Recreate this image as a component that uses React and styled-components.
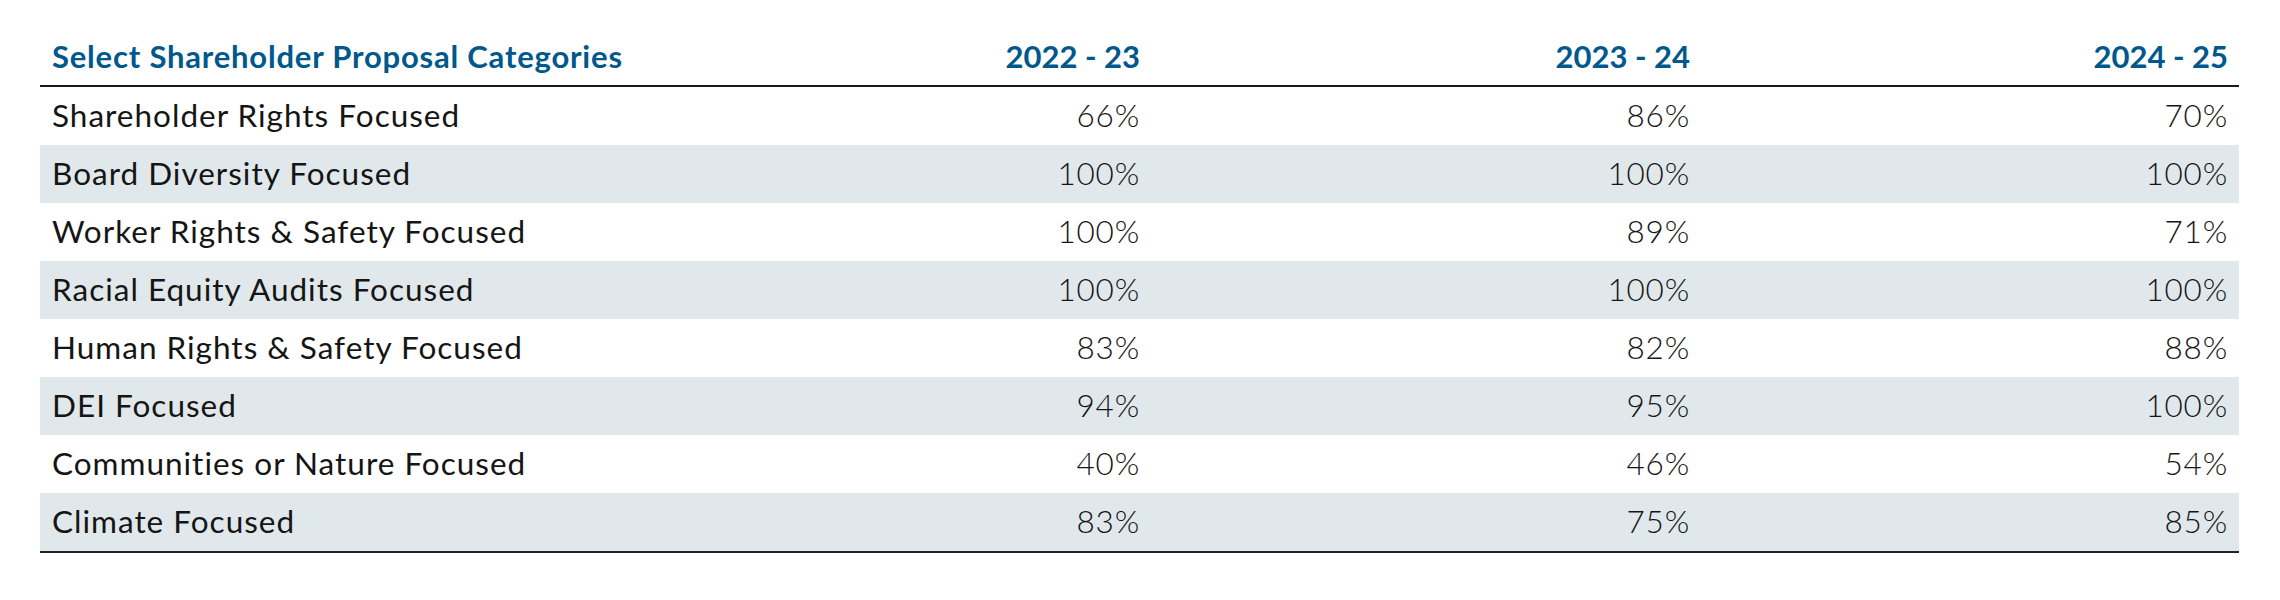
import React from "react";
import styled, { createGlobalStyle } from "styled-components";

const Global = createGlobalStyle`
  html, body { margin: 0; padding: 0; background: #ffffff; }
  body { font-family: Lato, "Open Sans", "Liberation Sans", sans-serif; }
`;

const Page = styled.div`
  padding: 30px 41px 0 40px;
`;

const Table = styled.div`
  display: grid;
  grid-template-columns: 561px 550px 550px 538px;
  border-bottom: 2px solid #222222;
`;

const HeadCell = styled.div`
  padding: 9px 11px 11px 12px;
  font-size: 31px;
  line-height: 35px;
  font-weight: 700;
  letter-spacing: ${(p) => (p.$num ? "0" : "0.8px")};
  color: #00588c;
  text-align: ${(p) => (p.$num ? "right" : "left")};
  border-bottom: 2px solid #1a1a1a;
  white-space: nowrap;
`;

const Cell = styled.div`
  height: 58px;
  box-sizing: border-box;
  padding: 0 11px 2px 12px;
  display: flex;
  align-items: center;
  justify-content: ${(p) => (p.$num ? "flex-end" : "flex-start")};
  background: ${(p) => (p.$shade ? "#e1e8eb" : "#ffffff")};
  font-size: 31.5px;
  font-weight: ${(p) => (p.$num ? 300 : 400)};
  letter-spacing: ${(p) => (p.$num ? "0.8px" : "1px")};
  color: #151515;
  white-space: nowrap;
`;

const headers = ["2022 - 23", "2023 - 24", "2024 - 25"];

const rows = [
  ["Shareholder Rights Focused", "66%", "86%", "70%"],
  ["Board Diversity Focused", "100%", "100%", "100%"],
  ["Worker Rights & Safety Focused", "100%", "89%", "71%"],
  ["Racial Equity Audits Focused", "100%", "100%", "100%"],
  ["Human Rights & Safety Focused", "83%", "82%", "88%"],
  ["DEI Focused", "94%", "95%", "100%"],
  ["Communities or Nature Focused", "40%", "46%", "54%"],
  ["Climate Focused", "83%", "75%", "85%"],
];

export default function App() {
  return (
    <Page>
      <Global />
      <Table>
        <HeadCell>Select Shareholder Proposal Categories</HeadCell>
        {headers.map((h) => (
          <HeadCell key={h} $num>
            {h}
          </HeadCell>
        ))}
        {rows.map((r, i) =>
          r.map((c, j) => (
            <Cell key={`${i}-${j}`} $num={j > 0} $shade={i % 2 === 1}>
              {c}
            </Cell>
          ))
        )}
      </Table>
    </Page>
  );
}
